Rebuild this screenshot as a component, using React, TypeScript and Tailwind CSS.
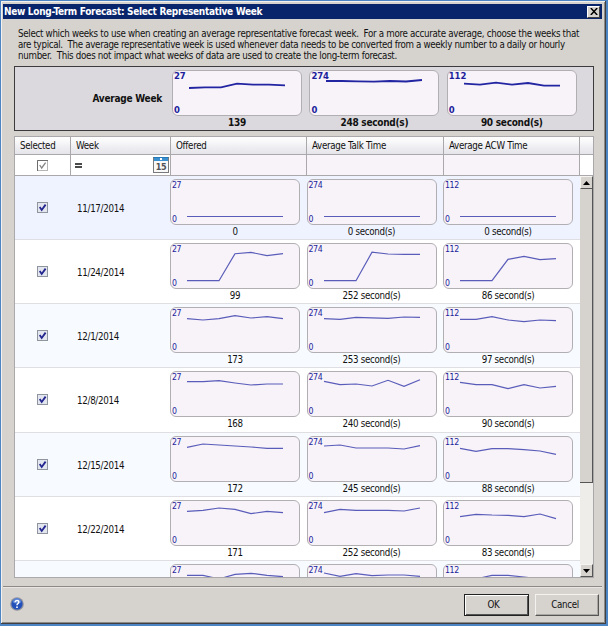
type ChartData = { max: string; label: string; points: number[] };
type Week = { date: string; tint: string; height: string; charts: ChartData[] };

const average: ChartData[] = [
  { max: "27", label: "139", points: [18, 17.3, 17.3, 13.7, 14.7, 14.7, 15.3] },
  { max: "274", label: "248 second(s)", points: [11, 11, 11.3, 11.7, 11, 11.5, 10] },
  { max: "112", label: "90 second(s)", points: [13.7, 14.7, 12.7, 14.7, 13, 15.7, 15.7] },
];

const flat = [37.5, 37.5, 37.5, 37.5, 37.5, 37.5, 37.5];

const weeks: Week[] = [
  {
    date: "11/17/2014", tint: "bg-[#eef3ff]", height: "h-16",
    charts: [
      { max: "27", label: "0", points: flat },
      { max: "274", label: "0 second(s)", points: flat },
      { max: "112", label: "0 second(s)", points: flat },
    ],
  },
  {
    date: "11/24/2014", tint: "bg-white", height: "h-16",
    charts: [
      { max: "27", label: "99", points: [37.7, 37.7, 37.7, 10.7, 9.4, 12.6, 10.7] },
      { max: "274", label: "252 second(s)", points: [37.7, 37.7, 37.7, 9.2, 11, 11.4, 11.4] },
      { max: "112", label: "86 second(s)", points: [37.7, 37.7, 37.7, 16.3, 13.3, 16.7, 15.7] },
    ],
  },
  {
    date: "12/1/2014", tint: "bg-[#f7fbff]", height: "h-16",
    charts: [
      { max: "27", label: "173", points: [11.7, 13, 11.7, 8.7, 11, 9.7, 11.7] },
      { max: "274", label: "253 second(s)", points: [11.7, 12.3, 10.3, 10.8, 11.3, 10, 10.3] },
      { max: "112", label: "97 second(s)", points: [12.3, 12.3, 9.7, 13, 14.7, 13, 13.7] },
    ],
  },
  {
    date: "12/8/2014", tint: "bg-white", height: "h-[65px]",
    charts: [
      { max: "27", label: "168", points: [10.7, 10.7, 9.7, 12, 14, 13, 13] },
      { max: "274", label: "240 second(s)", points: [10.3, 13.7, 13, 15, 9.3, 15.3, 8.7] },
      { max: "112", label: "90 second(s)", points: [11.3, 13.7, 13.7, 17.7, 13.7, 17, 15.3] },
    ],
  },
  {
    date: "12/15/2014", tint: "bg-[#f7fbff]", height: "h-16",
    charts: [
      { max: "27", label: "172", points: [11.3, 8, 9, 10, 11, 12.3, 12.3] },
      { max: "274", label: "245 second(s)", points: [10, 9, 12, 12, 12, 13, 9.7] },
      { max: "112", label: "88 second(s)", points: [12.3, 15.3, 12.7, 12.7, 13.7, 15, 18.3] },
    ],
  },
  {
    date: "12/22/2014", tint: "bg-white", height: "h-16",
    charts: [
      { max: "27", label: "171", points: [11.3, 10.3, 8, 9.3, 13.7, 11.3, 12.7] },
      { max: "274", label: "252 second(s)", points: [12.7, 9.3, 10.3, 10.3, 10.3, 11, 8] },
      { max: "112", label: "83 second(s)", points: [16.7, 14.3, 15, 15.3, 16.7, 14, 18.7] },
    ],
  },
  {
    date: "", tint: "bg-[#f7fbff]", height: "h-16",
    charts: [
      { max: "27", label: "", points: [11.3, 11.3, 15, 10.3, 9.3, 11.3, 12.7] },
      { max: "274", label: "", points: [9, 12.3, 9.7, 11.7, 11, 11, 12.3] },
      { max: "112", label: "", points: [15, 15, 11.3, 11.3, 13, 15, 15] },
    ],
  },
];

function Sparkline({ data, bold }: { data: ChartData; bold?: boolean }) {
  const pts = data.points.map((y, i) => `${16 + i * 16},${y - 1}`).join(" ");
  const axis = bold
    ? "font-['DejaVu_Sans',sans-serif] text-[8.5px] font-bold tracking-[-0.1px] [font-stretch:normal]"
    : "text-[8.7px] tracking-[-0.4px]";
  return (
    <div className="w-[130px] shrink-0">
      <div className="relative h-[46px] rounded-[6px] border border-[#b2afb3] bg-[#f7f3f8]">
        <svg className="block h-11 w-32" viewBox="0 0 128 44">
          <polyline points={pts} fill="none" stroke={bold ? "#2224a2" : "#5a5cba"} strokeWidth={bold ? 1.8 : 1.2} />
        </svg>
        <span className={`absolute left-px top-0 leading-[10px] text-[#1c1e9c] ${axis}`}>{data.max}</span>
        {data.label && (
          <span className={`absolute bottom-0 left-px leading-[10px] text-[#1c1e9c] ${axis}`}>0</span>
        )}
      </div>
      <div className={`text-center leading-[13px] ${bold ? "text-[10px] font-bold tracking-[-0.27px]" : ""}`}>{data.label}</div>
    </div>
  );
}

function Check({ muted }: { muted?: boolean }) {
  return (
    <svg className="size-[11px]" viewBox="0 0 11 11">
      <rect x=".5" y=".5" width="10" height="10" fill={muted ? "#fff" : "#e3e6ee"} stroke={muted ? "#b5b5b5" : "#8e959e"} />
      {muted && <path d="M.5 11V.5H11" fill="none" stroke="#6c6c6c" />}
      <path d="M2.7 5 4.7 8 8.6 2.6" fill="none" stroke={muted ? "#858585" : "#23268f"} strokeWidth={muted ? 1.3 : 1.8} />
    </svg>
  );
}

function ScrollButton({ down }: { down?: boolean }) {
  return (
    <div className="flex h-[13px] shrink-0 items-center justify-center border border-b-[#555] border-l-[#f5f4f1] border-r-[#555] border-t-[#f5f4f1] bg-[#d6d3ce]">
      <svg className="h-1 w-[7px]" viewBox="0 0 7 4">
        <path d={down ? "M0 0h7L3.5 4z" : "M0 4h7L3.5 0z"} fill="#000" />
      </svg>
    </div>
  );
}

const columns = [
  { name: "Selected", width: "w-14 pl-[5px]" },
  { name: "Week", width: "w-[100px] pl-[5px]" },
  { name: "Offered", width: "w-[136px] pl-[5px]" },
  { name: "Average Talk Time", width: "w-[137px] pl-[5px]" },
  { name: "Average ACW Time", width: "w-[136px] pl-[5px]" },
];

export default function App() {
  return (
    <div className="h-[626px] w-[608px] overflow-hidden bg-[#4c84c4] pb-[2px] pl-px pr-[2px] pt-px font-['DejaVu_Sans_Condensed','DejaVu_Sans',sans-serif] text-[9.7px] tracking-[-0.3px] text-[#111] [font-stretch:condensed]">
      <div className="flex h-[623px] w-[605px] flex-col border-b border-r border-b-[#404040] border-r-[#404040] bg-[#d6d3ce] shadow-[inset_1px_1px_0_#f3f1ed,inset_-1px_-1px_0_#8c8986]">
        <div className="ml-[2px] mr-[3px] mt-[3px] flex h-[15px] shrink-0 items-center justify-between bg-[#08246b] pl-px pr-[2px]">
          <span className="whitespace-nowrap text-[10px] font-bold leading-[14px] text-white">New Long-Term Forecast: Select Representative Week</span>
          <span className="flex h-3 w-[13px] items-center justify-center border border-b-[#404040] border-l-white border-r-[#404040] border-t-white bg-[#d6d3ce]">
            <svg className="h-[7px] w-2" viewBox="0 0 8 7"><path d="M.8 0 7.2 7M7.2 0 .8 7" stroke="#000" strokeWidth="1.5" /></svg>
          </span>
        </div>

        <div className="ml-[17px] mt-[9px] h-[38px] shrink-0 whitespace-pre leading-[11px]">
          <div>Select which weeks to use when creating an average representative forecast week.  For a more accurate average, choose the weeks that</div>
          <div className="tracking-[-0.33px]">are typical.  The average representative week is used whenever data needs to be converted from a weekly number to a daily or hourly</div>
          <div>number.  This does not impact what weeks of data are used to create the long-term forecast.</div>
        </div>

        <div className="ml-[13px] flex h-[65px] w-[580px] shrink-0 border border-[#3c3b3d] bg-[#dcd9de]">
          <div className="w-[157px] shrink-0 pr-2.5 pt-[26px] text-right text-[10px] font-bold leading-3 tracking-[-0.25px]">Average Week</div>
          <div className="flex gap-[7.4px] pt-[3px]">
            {average.map((d) => <Sparkline key={d.max} data={d} bold />)}
          </div>
        </div>

        <div className="ml-[13px] mt-[5px] flex h-[442px] w-[580px] shrink-0 flex-col overflow-hidden border border-[#aaa8ab] bg-white">
          <div className="flex h-[18px] shrink-0 border-b border-[#aaa8ab] bg-linear-to-b from-white to-[#e4e4ea] leading-[18px]">
            {columns.map((c) => (
              <div key={c.name} className={`${c.width} shrink-0 whitespace-nowrap border-r border-[#aaa8ab]`}>{c.name}</div>
            ))}
          </div>
          <div className="flex h-[21px] shrink-0 border-b border-[#aaa8ab]">
            <div className="flex w-14 shrink-0 items-center border-r border-[#aaa8ab] pl-[22px]"><Check muted /></div>
            <div className="flex w-[100px] shrink-0 items-center justify-between border-r border-[#aaa8ab] pl-1">
              <svg className="h-[5px] w-[7px]" viewBox="0 0 7 5"><path d="M0 1h7M0 4h7" stroke="#111" strokeWidth="1.6" /></svg>
              <div className="mr-px h-4 w-4 border border-[#77797d] border-t-[#2679b8] bg-[#f8f8f8]">
                <div className="h-[3px] bg-[#3b91cf] text-center"><div className="mx-auto h-[2px] w-[2px] bg-white" /></div>
                <div className="text-center text-[9px] font-bold leading-[12px] text-[#505256]">15</div>
              </div>
            </div>
            <div className="w-[136px] shrink-0 border-r border-[#aaa8ab] bg-[#f7f3f8]" />
            <div className="w-[137px] shrink-0 border-r border-[#aaa8ab] bg-[#f7f3f8]" />
            <div className="w-[136px] shrink-0 border-r border-[#aaa8ab] bg-[#f7f3f8]" />
          </div>
          <div className="flex min-h-0 flex-1">
            <div className="w-[565px] shrink-0 overflow-hidden">
              {weeks.map((w, i) => (
                <div key={i} className={`flex ${w.height} ${w.tint} border-b border-[#dfdfe3]`}>
                  <div className="w-14 shrink-0 pl-[22px] pt-[26px]">{w.date && <Check />}</div>
                  <div className="w-[99px] shrink-0 pl-[6px] pt-[26px] leading-[13px]">{w.date}</div>
                  <div className="flex gap-[6.5px] pt-[3px]">
                    {w.charts.map((d) => <Sparkline key={d.max} data={d} />)}
                  </div>
                </div>
              ))}
            </div>
            <div className="flex w-[13px] shrink-0 flex-col bg-[#efedea]">
              <ScrollButton />
              <div className="h-[294px] shrink-0 border-b border-r border-[#555] bg-[#d6d3ce]" />
              <div className="flex-1" />
              <ScrollButton down />
            </div>
          </div>
        </div>

        <div className="ml-[2px] mr-[3px] mt-2 h-[2px] shrink-0 border-b border-t border-b-[#e8e6e2] border-t-[#8c8986]" />
        <div className="ml-[9px] mr-[6px] mt-[6px] flex h-[22px] shrink-0">
          <svg className="mt-[3px] size-[14px]" viewBox="0 0 14 14">
            <circle cx="7" cy="7" r="6.8" fill="#8f939e" />
            <circle cx="7" cy="7" r="5.6" fill="#2451b9" />
            <path d="M2.5 5C4-.2 10-.2 11.5 5 9 7 5 7 2.5 5" fill="#5c85d5" />
            <path d="M5 5.3C5.2 2.8 9 3 8.8 5.2 8.7 6.6 7 6.4 7 8.2" fill="none" stroke="#fff" strokeWidth="1.5" />
            <circle cx="7" cy="10.2" r=".9" fill="#fff" />
          </svg>
          <button className="ml-auto h-[22px] w-[65px] border border-[#222] bg-[#d6d3ce] pr-1.5 shadow-[inset_1px_1px_0_#fff,inset_-1px_-1px_0_#555]">OK</button>
          <button className="ml-[6px] h-[22px] w-16 border border-b-[#555] border-l-[#f4f2ef] border-r-[#555] border-t-[#f4f2ef] bg-[#d6d3ce] pr-1 shadow-[inset_-1px_-1px_0_#aaa7a2]">Cancel</button>
        </div>
      </div>
    </div>
  );
}
